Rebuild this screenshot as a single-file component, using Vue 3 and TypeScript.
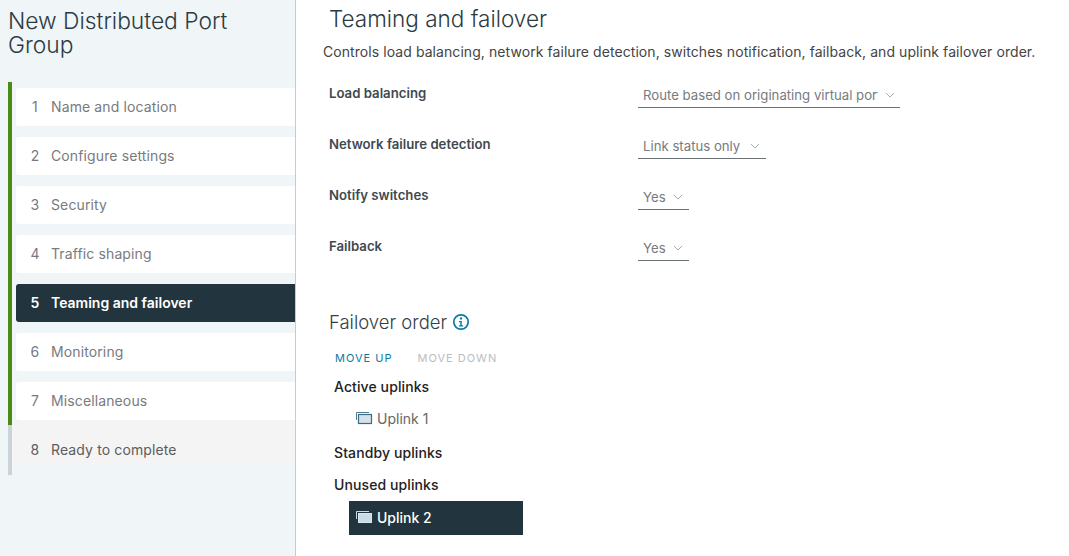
<script setup lang="ts">
interface Step { n: number; label: string; state: 'done' | 'active' | 'todo' }
const steps: Step[] = [
  { n: 1, label: 'Name and location', state: 'done' },
  { n: 2, label: 'Configure settings', state: 'done' },
  { n: 3, label: 'Security', state: 'done' },
  { n: 4, label: 'Traffic shaping', state: 'done' },
  { n: 5, label: 'Teaming and failover', state: 'active' },
  { n: 6, label: 'Monitoring', state: 'done' },
  { n: 7, label: 'Miscellaneous', state: 'done' },
  { n: 8, label: 'Ready to complete', state: 'todo' },
]
const fields = [
  { label: 'Load balancing', value: 'Route based on originating virtual port', cls: 'w-lb' },
  { label: 'Network failure detection', value: 'Link status only', cls: 'w-nf' },
  { label: 'Notify switches', value: 'Yes', cls: 'w-yes' },
  { label: 'Failback', value: 'Yes', cls: 'w-yes' },
]
</script>

<template>
  <div class="wizard">
    <aside class="side">
      <h1 class="title">New Distributed Port Group</h1>
      <ol class="steps">
        <li v-for="s in steps" :key="s.n" class="step" :class="s.state">
          <span class="num">{{ s.n }}</span>
          <span class="lbl">{{ s.label }}</span>
        </li>
      </ol>
    </aside>
    <main class="main">
      <h2 class="heading">Teaming and failover</h2>
      <p class="desc">Controls load balancing, network failure detection, switches notification, failback, and uplink failover order.</p>
      <div class="form">
        <div v-for="f in fields" :key="f.label" class="row">
          <label class="flabel">{{ f.label }}</label>
          <div class="select" :class="f.cls">
            <span class="val">{{ f.value }}</span>
            <svg class="chev" width="10" height="6" viewBox="0 0 10 6"><path d="M1 1l4 4 4-4" fill="none" stroke="#a5adb1" stroke-width="1"/></svg>
          </div>
        </div>
      </div>
      <div class="order-head">
        <h3 class="order-title">Failover order</h3>
        <svg class="info" width="18" height="18" viewBox="0 0 18 18">
          <circle cx="9" cy="9" r="7.2" fill="none" stroke="#0a7ca3" stroke-width="1.7"/>
          <circle cx="9" cy="5.4" r="1.2" fill="#0a7ca3"/>
          <path d="M7 8h2.8v4.200H11.200v1.200H6.900v-1.200h1.400V9.200H7z" fill="#0a7ca3"/>
        </svg>
      </div>
      <div class="actions">
        <span class="act on">MOVE UP</span>
        <span class="act off">MOVE DOWN</span>
      </div>
      <div class="group">Active uplinks</div>
      <div class="uplink">
        <svg class="ic" width="18" height="14" viewBox="0 0 18 14"><path d="M1.500 9V1.500H14" fill="none" stroke="#4f7a90" stroke-width="1"/><rect x="3.500" y="3.500" width="13" height="9" fill="#d3e2ea" stroke="#3f6a80" stroke-width="1.200"/></svg>
        <span>Uplink 1</span>
      </div>
      <div class="group g2">Standby uplinks</div>
      <div class="group g3">Unused uplinks</div>
      <div class="uplink sel">
        <svg class="ic" width="18" height="14" viewBox="0 0 18 14"><path d="M1.500 9V1.500H14" fill="none" stroke="#c9dbe5" stroke-width="1"/><rect x="3.500" y="3.500" width="13" height="9" fill="#c9dbe5" stroke="#dbe7ee" stroke-width="1"/></svg>
        <span>Uplink 2</span>
      </div>
    </main>
  </div>
</template>

<style>
html, body { margin: 0; padding: 0; background: #fff; }
</style>

<style scoped>
.wizard {
  display: flex;
  width: 1069px;
  height: 556px;
  overflow: hidden;
  font-family: Inter, "Liberation Sans", sans-serif;
  background: #fff;
}
.side {
  width: 287px;
  flex: none;
  background: #f0f5f8;
  border-right: 1px solid #c3ccd2;
  padding: 9px 0 0 8px;
  box-sizing: content-box;
}
.title {
  margin: 0 0 25px;
  font-size: 22.800px;
  line-height: 24px;
  font-weight: 300;
  color: #2c3a42;
  width: 250px;
}
.steps {
  list-style: none;
  margin: 0;
  padding: 0;
  display: flex;
  flex-direction: column;
}
.step {
  display: flex;
  align-items: center;
  height: 49px;
  box-sizing: border-box;
  padding: 5px 0 6px 8px;
  border-left: 4px solid #4c8a17;
  position: relative;
  font-size: 14px;
  letter-spacing: 0.12px;
  color: #777b7e;
}
.step::before {
  content: "";
  position: absolute;
  left: 4px;
  right: 0;
  top: 6px;
  bottom: 5px;
  background: #fff;
  border-radius: 3px 0 0 3px;
}
.step.active::before { background: #22343d; }
.step.todo::before { background: #f4f4f4; top: -5px; bottom: 12px; border-radius: 0; left: 0; }
.step.todo { border-left-color: #c9d3d8; color: #5c5c5c; height: 50px; padding-bottom: 7px; }
.step.active { color: #fff; font-weight: 600; letter-spacing: 0; }
.num { position: relative; width: 31px; text-align: center; flex: none; padding-right: 1px; box-sizing: border-box; }
.lbl { position: relative; }
.main {
  flex: 1;
  padding: 6px 0 0 27px;
  color: #333;
  min-width: 0;
}
.heading {
  margin: 0 0 0 6px;
  font-size: 22.500px;
  line-height: 26px;
  font-weight: 300;
  color: #2c3a42;
}
.desc {
  margin: 11px 0 0;
  font-size: 14px;
  letter-spacing: 0.07px;
  line-height: 18px;
  color: #444;
  white-space: nowrap;
}
.form { margin: 23px 0 0 6px; }
.row {
  display: flex;
  height: 51px;
  align-items: flex-start;
}
.flabel {
  width: 309px;
  flex: none;
  font-size: 13.200px;
  font-weight: 600;
  line-height: 18px;
  color: #3f4a50;
}
.select {
  display: flex;
  align-items: center;
  box-sizing: border-box;
  height: 28px;
  margin-top: -4px;
  padding: 3px 5px 0;
  border-bottom: 1px solid #6b7275;
  font-size: 13.200px;
  color: #777b7e;
}
.w-lb { width: 262px; }
.w-nf { width: 128px; }
.w-yes { width: 51px; }
.val { white-space: nowrap; overflow: hidden; }
.w-lb .val { width: 235px; }
.chev { flex: none; margin-left: 7px; }
.w-nf .chev { margin-left: 10px; }
.order-head {
  display: flex;
  align-items: center;
  gap: 5px;
  margin: 22px 0 0 6px;
}
.order-title {
  margin: 0;
  font-size: 18.500px;
  line-height: 24px;
  font-weight: 300;
  color: #333f46;
}
.actions { display: flex; gap: 25px; margin: 16px 0 0 12px; font-size: 11px; line-height: 16px; letter-spacing: 1px; font-weight: 400; }
.on { color: #0a7ca3; }
.off { color: #b9bdc0; }
.group {
  margin: 12px 0 0 11px;
  font-size: 14px;
  letter-spacing: 0.1px;
  line-height: 18px;
  font-weight: 500;
  color: #222;
}
.g2 { margin-top: 8px; }
.g3 { margin-top: 14px; }
.uplink {
  display: flex;
  align-items: center;
  gap: 4px;
  width: 174px;
  height: 34px;
  box-sizing: border-box;
  margin: 6px 0 0 26px;
  padding: 0 0 2px 6px;
  font-size: 14px;
  color: #666;
}
.uplink.sel { background: #22343d; color: #fff; margin-top: 7px; font-weight: 500; }
</style>
